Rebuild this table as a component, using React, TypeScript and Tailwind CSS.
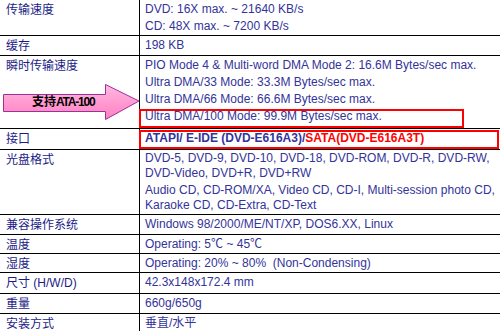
import type { ReactNode } from "react";

const sans = "font-['Liberation_Sans','Noto_Sans_CJK_SC',sans-serif]";

type RowProps = {
  label: ReactNode;
  h: string;
  children: ReactNode;
  last?: boolean;
};

function Row({ label, h, children, last }: RowProps) {
  return (
    <div className={`flex ${h} ${last ? "" : "border-b border-black"}`}>
      <div className="flex w-[140px] shrink-0 flex-col border-r border-black pl-[6px] pt-[2px] text-[12px] leading-[16px] text-[#1c1c86]">
        {label}
      </div>
      <div className="flex min-w-0 flex-1 flex-col pl-[5px] pt-[1px] text-[12px] leading-[17px] text-[#33339a]">
        {children}
      </div>
    </div>
  );
}

function Arrow() {
  return (
    <div className="pointer-events-none absolute left-0 top-[80px] h-[42px] w-[142px]">
      <svg width="142" height="42" viewBox="0 0 142 42">
        <defs>
          <linearGradient id="pink" x1="0" y1="0" x2="0" y2="1">
            <stop offset="0" stopColor="#ffb8e0" />
            <stop offset="1" stopColor="#ff7fc2" />
          </linearGradient>
        </defs>
        <polygon
          points="3.5,14.5 105.5,14.5 105.5,4.5 139,21 105.5,39.5 105.5,31.5 3.5,31.5"
          fill="url(#pink)"
          stroke="#993399"
          strokeWidth="1"
        />
      </svg>
      <span className="absolute left-[32px] top-[14px] text-[12px] font-bold leading-[17px] text-black">
        支持<span className="tracking-[-1.2px]">ATA-100</span>
      </span>
    </div>
  );
}

export default function App() {
  return (
    <div className={`relative h-[331px] w-[500px] overflow-hidden bg-white ${sans}`}>
      <Row label="传输速度" h="h-[36px]">
        <div>DVD: 16X max. ~ 21640 KB/s</div>
        <div>CD: 48X max. ~ 7200 KB/s</div>
      </Row>
      <Row label="缓存" h="h-[20px]">
        <div>198 KB</div>
      </Row>
      <Row label="瞬时传输速度" h="h-[73px]">
        <div>PIO Mode 4 &amp; Multi-word DMA Mode 2: 16.6M Bytes/sec max.</div>
        <div>Ultra DMA/33 Mode: 33.3M Bytes/sec max.</div>
        <div>Ultra DMA/66 Mode: 66.6M Bytes/sec max.</div>
        <div>Ultra DMA/100 Mode: 99.9M Bytes/sec max.</div>
      </Row>
      <Row label="接口" h="h-[21px]">
        <div className="font-bold">
          ATAPI/ E-IDE (DVD-E616A3)/<span className="text-[#ff0000]">SATA(DVD-E616A3T)</span>
        </div>
      </Row>
      <Row label="光盘格式" h="h-[65px]">
        <div className="leading-[15px]">DVD-5, DVD-9, DVD-10, DVD-18, DVD-ROM, DVD-R, DVD-RW,</div>
        <div className="leading-[15px]">DVD-Video, DVD+R, DVD+RW</div>
        <div className="mt-[2px] leading-[15px]">Audio CD, CD-ROM/XA, Video CD, CD-I, Multi-session photo CD,</div>
        <div className="leading-[15px]">Karaoke CD, CD-Extra, CD-Text</div>
      </Row>
      <Row label="兼容操作系统" h="h-[20px]">
        <div>Windows 98/2000/ME/NT/XP, DOS6.XX, Linux</div>
      </Row>
      <Row label="温度" h="h-[19px]">
        <div>Operating: 5℃ ~ 45℃</div>
      </Row>
      <Row label="湿度" h="h-[19px]">
        <div>Operating: 20% ~ 80%&nbsp; (Non-Condensing)</div>
      </Row>
      <Row label="尺寸 (H/W/D)" h="h-[21px]">
        <div>42.3x148x172.4 mm</div>
      </Row>
      <Row label="重量" h="h-[20px]">
        <div>660g/650g</div>
      </Row>
      <Row label="安装方式" h="h-[18px]" last>
        <div>垂直/水平</div>
      </Row>

      <Arrow />
      {/* highlight boxes around the DMA/100 line and the interface row */}
      <div className="pointer-events-none absolute left-[139px] top-[109px] h-[19px] w-[325px] border-2 border-[#ff0000]" />
      <div className="pointer-events-none absolute left-[139px] top-[130px] h-[19px] w-[360px] border-2 border-[#ff0000]" />
    </div>
  );
}
